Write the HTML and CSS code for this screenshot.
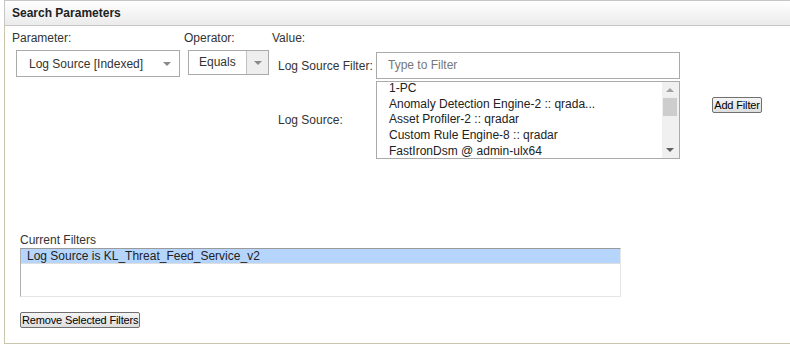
FILE: index.html
```html
<!DOCTYPE html>
<html lang="en">

<head>
    <meta charset="UTF-8">
    <title>Search Parameters</title>
    <link rel="stylesheet" href="styles.css">
</head>

<body>
    <div class="panel">
        <div class="panel-head">Search Parameters</div>
        <div class="panel-body">
            <div class="params">
                <div class="col col-param">
                    <div class="lbl">Parameter:</div>
                    <div class="select select-param">
                        <span>Log Source [Indexed]</span>
                        <span class="caret"></span>
                    </div>
                </div>
                <div class="col col-op">
                    <div class="lbl">Operator:</div>
                    <div class="select select-op">
                        <span class="op-text">Equals</span>
                        <span class="op-btn"><span class="caret"></span></span>
                    </div>
                </div>
                <div class="col col-value">
                    <div class="lbl">Value:</div>
                    <div class="value-grid">
                        <div class="vlbl">Log Source Filter:</div>
                        <div class="filter-input">Type to Filter</div>
                        <div></div>
                        <div class="vlbl">Log Source:</div>
                        <div class="listbox">
                            <ul class="items">
                                <li>1-PC</li>
                                <li>Anomaly Detection Engine-2 :: qrada...</li>
                                <li>Asset Profiler-2 :: qradar</li>
                                <li>Custom Rule Engine-8 :: qradar</li>
                                <li>FastIronDsm @ admin-ulx64</li>
                            </ul>
                            <div class="scrollbar">
                                <span class="arrow up"></span>
                                <span class="thumb"></span>
                                <span class="arrow down"></span>
                            </div>
                        </div>
                        <div class="add-cell"><button class="btn btn-add">Add Filter</button></div>
                    </div>
                </div>
            </div>

            <div class="current">
                <div class="cur-lbl">Current Filters</div>
                <div class="filters">
                    <div class="filter-row selected">Log Source is KL_Threat_Feed_Service_v2</div>
                </div>
                <button class="btn btn-remove">Remove Selected Filters</button>
            </div>
        </div>
    </div>
</body>

</html>
```

FILE: styles.css
```css
body {
    margin: 0;
    background: #fff;
    font-family: "Liberation Sans", Arial, sans-serif;
    font-size: 12px;
    color: #333;
}

ul {
    list-style: none;
    margin: 0;
    padding: 0;
}

.panel {
    margin-left: 4px;
    height: 344px;
    border-left: 1px solid #c9c6ab;
    border-bottom: 1px solid #c9c6ab;
    box-sizing: border-box;
}

.panel-head {
    height: 26px;
    margin-left: -1px;
    padding-left: 7px;
    border: 1px solid #c6c6c6;
    border-right: none;
    background: linear-gradient(#ffffff, #ebebeb);
    font-weight: bold;
    font-size: 12px;
    line-height: 24px;
    color: #222;
    box-sizing: border-box;
}

.panel-body {
    padding: 4px 0 0 7px;
}

.params {
    display: flex;
}

.lbl {
    line-height: 16px;
    height: 16px;
}

.col-param {
    width: 172px;
}

.col-op {
    width: 88px;
}

.select {
    display: flex;
    align-items: center;
    margin: 4px 0 0 4px;
    border: 1px solid #aaa;
    box-sizing: border-box;
    background: #fff;
    color: #333;
}

.select-param {
    width: 164px;
    height: 27px;
    padding: 0 0 0 12px;
    justify-content: space-between;
}

.select-param .caret {
    margin-right: 8px;
}

.select-op {
    width: 81px;
    height: 25px;
}

.op-text {
    flex: 1;
    padding-left: 10px;
    margin-top: -2px;
}

.op-btn {
    width: 21px;
    height: 100%;
    border-left: 1px solid #c2c2c2;
    background: #eeeeee;
    display: flex;
    align-items: center;
    justify-content: center;
}

.caret {
    width: 0;
    height: 0;
    border-left: 4px solid transparent;
    border-right: 4px solid transparent;
    border-top: 4px solid #8a8a8a;
}

.value-grid {
    display: grid;
    grid-template-columns: 98px 304px auto;
    row-gap: 2px;
    margin: 6px 0 0 6px;
}

.vlbl {
    display: flex;
    align-items: center;
    color: #333;
}

.filter-input {
    height: 27px;
    border: 1px solid #aaa;
    box-sizing: border-box;
    padding-left: 11px;
    line-height: 25px;
    color: #777;
}

.listbox {
    position: relative;
    height: 78px;
    border: 1px solid #aaa;
    box-sizing: border-box;
    overflow: hidden;
}

.items {
    margin-top: -1px;
    padding-left: 12px;
    color: #222;
}

.items li {
    line-height: 15.7px;
    white-space: nowrap;
}

.scrollbar {
    position: absolute;
    top: 0;
    right: 0;
    width: 17px;
    height: 100%;
    background: #f0f0f0;
}

.thumb {
    position: absolute;
    left: 1px;
    top: 16px;
    width: 14px;
    height: 18px;
    background: #cdcdcd;
}

.arrow {
    position: absolute;
    left: 4px;
    width: 0;
    height: 0;
    border-left: 4px solid transparent;
    border-right: 4px solid transparent;
}

.arrow.up {
    top: 6px;
    border-bottom: 4px solid #a3a3a3;
}

.arrow.down {
    bottom: 6px;
    border-top: 4px solid #606060;
}

.add-cell {
    padding: 16px 0 0 32px;
}

.btn {
    font-family: "Liberation Sans", Arial, sans-serif;
    font-size: 11px;
    letter-spacing: -0.15px;
    white-space: nowrap;
    color: #000;
    padding: 0 1px;
    height: 16px;
    line-height: 13px;
    border: 1px solid #707070;
    border-radius: 2px;
    background: linear-gradient(#f4f4f4, #dedede);
}

.btn-add {
    width: 50px;
    padding: 0;
}

.current {
    margin-top: 74px;
    padding-left: 8px;
}

.cur-lbl {
    line-height: 15px;
}

.filters {
    width: 601px;
    height: 49px;
    box-sizing: border-box;
    border-top: 1px solid #9a9a9a;
    border-left: 1px solid #b0b0b0;
    border-right: 1px solid #e6e6e6;
    border-bottom: 1px solid #e6e6e6;
}

.filter-row {
    height: 15px;
    line-height: 14px;
    padding-left: 6px;
    color: #222;
}

.filter-row.selected {
    background: #b5d5fd;
    border-bottom: 1px solid #dedede;
    height: 14px;
}

.btn-remove {
    margin-top: 15px;
}
```
